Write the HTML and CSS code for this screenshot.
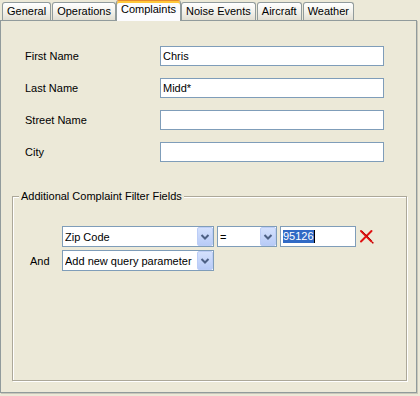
FILE: index.html
```html
<!DOCTYPE html>
<html lang="en">
<head>
  <meta charset="UTF-8" />
  <title>Complaints Search</title>
  <link rel="stylesheet" href="styles.css">
</head>
<body>

  <!-- TAB STRIP -->
  <div class="tabs">
    <div class="tab">General</div>
    <div class="tab">Operations</div>
    <div class="tab selected">Complaints</div>
    <div class="tab">Noise Events</div>
    <div class="tab">Aircraft</div>
    <div class="tab">Weather</div>
  </div>

  <!-- COMPLAINTS PANEL -->
  <div class="panel">
    <div class="fields">
      <span class="label">First Name</span>
      <div class="textbox">Chris</div>
      <span class="label">Last Name</span>
      <div class="textbox">Midd*</div>
      <span class="label">Street Name</span>
      <div class="textbox"></div>
      <span class="label">City</span>
      <div class="textbox"></div>
    </div>

    <fieldset class="group">
      <legend>Additional Complaint Filter Fields</legend>
      <div class="query">
        <span></span>
        <div class="combo">
          <span class="value">Zip Code</span>
          <span class="arrow"><svg width="16" height="19" viewBox="0 0 16 19"><path d="M4.5 8 L8 11.5 L11.5 8" fill="none" stroke="#4d6185" stroke-width="2"/></svg></span>
        </div>
        <div class="combo">
          <span class="value">=</span>
          <span class="arrow"><svg width="16" height="19" viewBox="0 0 16 19"><path d="M4.5 8 L8 11.5 L11.5 8" fill="none" stroke="#4d6185" stroke-width="2"/></svg></span>
        </div>
        <div class="textbox"><span class="sel">95126</span><span class="caret"></span></div>
        <span class="remove">
          <svg width="15" height="15" viewBox="0 0 15 15">
            <path d="M2 2 L12.5 12.5 M12.5 2 L2 12.5" stroke="#e01010" stroke-width="2" stroke-linecap="round"/>
            <path d="M3 2 L12.5 11.5" stroke="#a00000" stroke-width="0.7"/>
            <rect x="13" y="13" width="1.5" height="1.5" fill="#c00000"/>
          </svg>
        </span>

        <span class="label">And</span>
        <div class="combo wide">
          <span class="value">Add new query parameter</span>
          <span class="arrow"><svg width="16" height="19" viewBox="0 0 16 19"><path d="M4.5 8 L8 11.5 L11.5 8" fill="none" stroke="#4d6185" stroke-width="2"/></svg></span>
        </div>
      </div>
    </fieldset>
  </div>

</body>
</html>
```

FILE: styles.css
```css
* { box-sizing: border-box; }
body {
  margin: 0;
  width: 420px;
  height: 396px;
  overflow: hidden;
  background: #ece9d8;
  font-family: "Liberation Sans", Arial, sans-serif;
  font-size: 11px;
  color: #000;
}

/* tabs */
.tabs {
  display: flex;
  align-items: flex-end;
  height: 20px;
  padding-left: 2px;
  gap: 1px;
}
.tab {
  height: 18px;
  padding: 0 4px;
  line-height: 17px;
  border: 1px solid #919b9c;
  border-bottom: none;
  border-radius: 3px 3px 0 0;
  background: linear-gradient(#ffffff, #f3f2ec 50%, #e2dfd3);
}
.tab.selected {
  position: relative;
  z-index: 1;
  height: 21px;
  margin: 0 -1px -1px;
  padding: 0 4px;
  line-height: 16px;
  border-top-color: #e68b2c;
  background: #fcfcfe;
  box-shadow: inset 0 2px 0 #ffc83c;
}

/* panel */
.panel {
  display: flex;
  flex-direction: column;
  width: 417px;
  height: 373px;
  border: 1px solid #919b9c;
  box-shadow: 1px 1px 0 #c9c7ba;
}
.fields {
  display: grid;
  grid-template-columns: 135px 224px;
  grid-auto-rows: 20px;
  row-gap: 12px;
  padding: 25px 0 0 24px;
}
.label {
  align-self: center;
}
.textbox {
  display: flex;
  align-items: center;
  padding-left: 2px;
  border: 1px solid #7f9db9;
  background: #fff;
  line-height: 13px;
  white-space: nowrap;
}
.sel {
  background: #316ac5;
  color: #fff;
}
.caret {
  width: 1px;
  height: 13px;
  background: #000;
}

/* filter group */
.group {
  flex: 1;
  min-width: 0;
  margin: 28px 9px 11px 11px;
  padding: 23px 0 0 6px;
  border: 1px solid #aca899;
  box-shadow: inset 1px 1px 0 #fff, 1px 1px 0 #fff;
}
.group legend {
  padding: 0 2px;
  line-height: 13px;
  background: #ece9d8;
}
.query {
  display: grid;
  grid-template-columns: 29px 152px 60px 76px 15px;
  grid-auto-rows: 21px;
  column-gap: 3px;
  row-gap: 3px;
  margin-left: 11px;
}
.combo {
  display: flex;
  align-items: center;
  padding-left: 2px;
  border: 1px solid #7f9db9;
  background: #fff;
  white-space: nowrap;
}
.combo.wide {
  grid-column: 2;
}
.combo .value {
  flex: 1;
  overflow: hidden;
}
.arrow {
  display: flex;
  width: 16px;
  height: 19px;
  border: 1px solid #bccdf6;
  border-radius: 2px;
  background: linear-gradient(#d4e1fd, #b8cbf7);
}
.arrow svg {
  margin: -1px;
}
.remove {
  display: flex;
  align-items: center;
}
```
